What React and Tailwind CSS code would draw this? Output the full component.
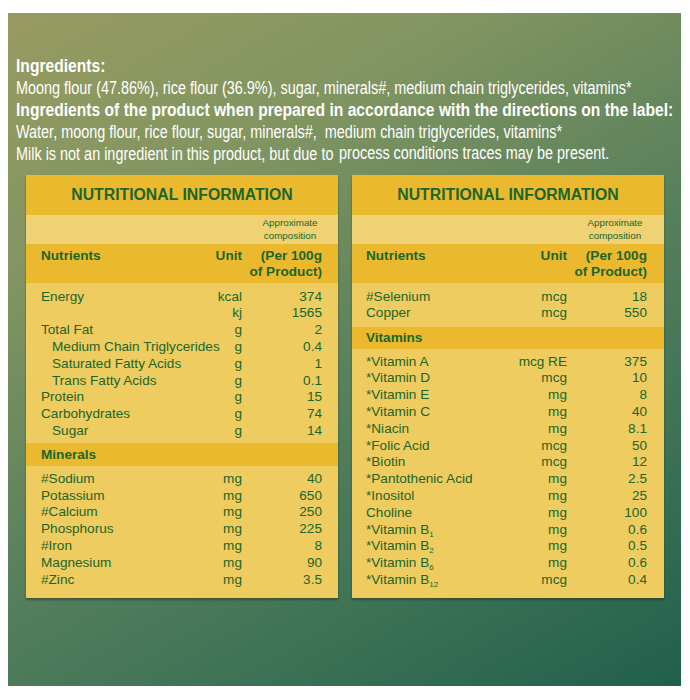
const green = "text-[#1b6629]";

const left = [
  { n: "Energy", u: "kcal", v: "374" },
  { n: "", u: "kj", v: "1565" },
  { n: "Total Fat", u: "g", v: "2" },
  { n: "Medium Chain Triglycerides", u: "g", v: "0.4", sub: true },
  { n: "Saturated Fatty Acids", u: "g", v: "1", sub: true },
  { n: "Trans Fatty Acids", u: "g", v: "0.1", sub: true },
  { n: "Protein", u: "g", v: "15" },
  { n: "Carbohydrates", u: "g", v: "74" },
  { n: "Sugar", u: "g", v: "14", sub: true },
];

const minerals = [
  ["#Sodium", "mg", "40"],
  ["Potassium", "mg", "650"],
  ["#Calcium", "mg", "250"],
  ["Phosphorus", "mg", "225"],
  ["#Iron", "mg", "8"],
  ["Magnesium", "mg", "90"],
  ["#Zinc", "mg", "3.5"],
];

const trace = [
  ["#Selenium", "mcg", "18"],
  ["Copper", "mcg", "550"],
];

const vitamins = [
  ["*Vitamin A", "mcg RE", "375"],
  ["*Vitamin D", "mcg", "10"],
  ["*Vitamin E", "mg", "8"],
  ["*Vitamin C", "mg", "40"],
  ["*Niacin", "mg", "8.1"],
  ["*Folic Acid", "mcg", "50"],
  ["*Biotin", "mcg", "12"],
  ["*Pantothenic Acid", "mg", "2.5"],
  ["*Inositol", "mg", "25"],
  ["Choline", "mg", "100"],
  ["*Vitamin B", "mg", "0.6", "1"],
  ["*Vitamin B", "mg", "0.5", "2"],
  ["*Vitamin B", "mg", "0.6", "6"],
  ["*Vitamin B", "mcg", "0.4", "12"],
];

function Row({ name, unit, value, sub, idx, unitW, padL }) {
  return (
    <div className={`flex h-[16.8px] items-center leading-[16.8px] ${padL}`}>
      <div className={`min-w-0 flex-1 whitespace-nowrap ${sub ? "pl-[11px]" : ""}`}>
        {name}
        {idx && <span className="relative top-[3px] text-[8px] leading-none">{idx}</span>}
      </div>
      <div className={`${unitW} text-right whitespace-nowrap`}>{unit}</div>
      <div className="w-[80px] text-right">{value}</div>
    </div>
  );
}

function Table({ padL, padR, unitW, children }) {
  return (
    <div
      className={`flex w-[312px] flex-col bg-[#eecc5f] ${green} text-[13.6px] shadow-[0_2px_2px_rgba(30,40,10,0.45)]`}
      style={{ fontFamily: '"Liberation Sans", Arial, sans-serif' }}
    >
      <div className="flex h-[40px] items-center justify-center bg-[#ebb92e] text-[15.8px] font-bold">
        NUTRITIONAL INFORMATION
      </div>
      <div className={`flex h-[29px] items-center justify-end bg-[#efd273] ${padR}`}>
        <div className="w-[64px] text-center text-[9.8px] leading-[12.5px]">
          Approximate
          <br />
          composition
        </div>
      </div>
      <div className={`flex h-[39px] items-start bg-[#ebb92e] pt-[4px] font-bold leading-[16px] ${padL} ${padR}`}>
        <div className="flex-1">Nutrients</div>
        <div className={`${unitW} text-right`}>Unit</div>
        <div className="w-[80px] text-right">
          (Per 100g
          <br />
          of Product)
        </div>
      </div>
      <div className={`flex flex-1 flex-col ${padR}`}>{children(padL)}</div>
    </div>
  );
}

function Band({ label, h, padL, mr }) {
  return <div className={`flex items-center bg-[#ebb92e] font-bold ${mr} ${h} ${padL}`}>{label}</div>;
}

function Line({ bold, children }) {
  return (
    <div className="h-[22px]">
      <p
        className={`w-max origin-top-left whitespace-nowrap ${
          bold ? "scale-x-[0.893] font-bold" : "scale-x-[0.824]"
        }`}
      >
        {children}
      </p>
    </div>
  );
}

export default function App() {
  return (
    <div className="h-[700px] w-[690px] overflow-hidden bg-white pl-[8px] pt-[13px]">
      <div className="h-[673px] w-[673px] overflow-hidden bg-[linear-gradient(150deg,#989b60_0%,#829561_25%,#567f5c_55%,#3a7155_78%,#215f4d_100%)] px-[8px] pt-[42px]">
        <div
          className="h-[110px] text-[17.5px] leading-[22px] text-white"
          style={{ fontFamily: '"Liberation Sans", Arial, sans-serif' }}
        >
          <Line bold>Ingredients:</Line>
          <Line>Moong flour (47.86%), rice flour (36.9%), sugar, minerals#, medium chain triglycerides, vitamins*</Line>
          <Line bold>Ingredients of the product when prepared in accordance with the directions on the label:</Line>
          <Line>Water, moong flour, rice flour, sugar, minerals#,&nbsp; medium chain triglycerides, vitamins*</Line>
          <Line>
            Milk is not an ingredient in this product, but due to{" "}
            <span className="relative -top-[1px] ml-[2px]">process conditions traces may be present.</span>
          </Line>
        </div>

        <div className="ml-[10px] mt-[10px] flex gap-[14px]">
          <Table padL="pl-[15px]" padR="pr-[16px]" unitW="w-[40px]">
            {(padL) => (
              <>
                <div className="pb-[3.5px] pt-[5.6px]">
                  {left.map((r, i) => (
                    <Row key={i} name={r.n} unit={r.u} value={r.v} sub={r.sub} unitW="w-[40px]" padL={padL} />
                  ))}
                </div>
                <Band label="Minerals" h="h-[23px]" padL={padL} mr="-mr-[16px]" />
                <div className="pb-[9.6px] pt-[4.6px]">
                  {minerals.map(([n, u, v], i) => (
                    <Row key={i} name={n} unit={u} value={v} unitW="w-[40px]" padL={padL} />
                  ))}
                </div>
              </>
            )}
          </Table>
          <Table padL="pl-[14px]" padR="pr-[17px]" unitW="w-[60px]">
            {(padL) => (
              <>
                <div className="pb-[4.8px] pt-[5.6px]">
                  {trace.map(([n, u, v], i) => (
                    <Row key={i} name={n} unit={u} value={v} unitW="w-[60px]" padL={padL} />
                  ))}
                </div>
                <Band label="Vitamins" h="h-[22px]" padL={padL} mr="-mr-[17px]" />
                <div className="pb-[9.6px] pt-[4.6px]">
                  {vitamins.map(([n, u, v, s], i) => (
                    <Row key={i} name={n} unit={u} value={v} idx={s} unitW="w-[60px]" padL={padL} />
                  ))}
                </div>
              </>
            )}
          </Table>
        </div>
      </div>
    </div>
  );
}
